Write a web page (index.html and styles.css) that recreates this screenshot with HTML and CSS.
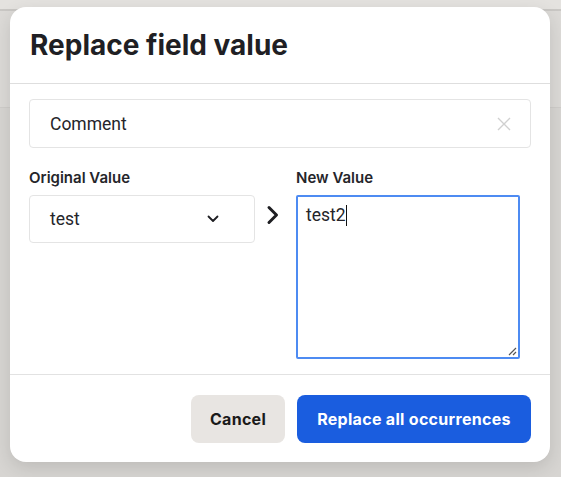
FILE: index.html
```html
<!DOCTYPE html>
<html>
<head>
<meta charset="utf-8">
<link rel="stylesheet" href="styles.css">
</head>
<body>
<div class="backdrop">
  <div class="bg-top"></div>
  <div class="bg-band"></div>
  <div class="bg-rest"></div>
</div>
<div class="modal">
  <div class="modal-header">
    <h1 class="title">Replace field value</h1>
  </div>
  <div class="modal-body">
    <div class="field-input">
      <span class="field-text">Comment</span>
      <svg class="clear-icon" width="14" height="14" viewBox="0 0 14 14"><path d="M1 1L13 13M13 1L1 13" stroke="#d0d0d0" stroke-width="1.4" fill="none"/></svg>
    </div>
    <div class="columns">
      <div class="col">
        <div class="label">Original Value</div>
        <div class="select">
          <span>test</span>
          <svg width="12" height="8" viewBox="0 0 12 8"><path d="M1.5 1.5L6 6L10.5 1.5" stroke="#1e1e22" stroke-width="1.8" fill="none" stroke-linecap="round" stroke-linejoin="round"/></svg>
        </div>
      </div>
      <div class="arrow-col">
        <svg width="14" height="20" viewBox="0 0 14 20"><path d="M3 2.5L10.5 10L3 17.5" stroke="#1e1e22" stroke-width="3" fill="none" stroke-linecap="round" stroke-linejoin="round"/></svg>
      </div>
      <div class="col">
        <div class="label">New Value</div>
        <div class="textarea">
          <span>test2</span><span class="caret"></span>
          <svg class="grip" width="10" height="10" viewBox="0 0 10 10"><path d="M9 2L2 9M9 6L6 9" stroke="#555" stroke-width="1.2" fill="none"/></svg>
        </div>
      </div>
    </div>
  </div>
  <div class="modal-footer">
    <button class="btn btn-cancel">Cancel</button>
    <button class="btn btn-primary">Replace all occurrences</button>
  </div>
</div>
</body>
</html>
```
FILE: styles.css
```css
html, body {
  margin: 0;
  padding: 0;
  height: 100%;
}
body {
  font-family: Inter, "Noto Sans", "Liberation Sans", sans-serif;
  background: #d6d4d1;
  overflow: hidden;
}
.backdrop {
  display: flex;
  flex-direction: column;
  height: 100%;
}
.bg-top {
  height: 9px;
  background: #e4e2df;
  border-bottom: 2px solid #c9c7c4;
}
.bg-band {
  height: 96px;
  background: #dcdad7;
  border-bottom: 1px solid #cfcdca;
}
.bg-rest {
  flex: 1;
  background: #d7d5d2;
}
.modal {
  position: absolute;
  left: 10px;
  top: 7px;
  width: 540px;
  background: #fff;
  border-radius: 16px;
  box-shadow: 0 6px 18px rgba(0,0,0,0.12);
}
.modal-header {
  padding: 21px 20px 21px;
  border-bottom: 1px solid #dedede;
}
.title {
  margin: 0;
  font-size: 28px;
  line-height: 34px;
  font-weight: 700;
  color: #1f1f24;
}
.modal-body {
  padding: 15px 19px 15px;
  border-bottom: 1px solid #e2e2e2;
}
.field-input {
  height: 49px;
  box-sizing: border-box;
  border: 1px solid #e4e4e4;
  border-radius: 4px;
  display: flex;
  align-items: center;
  justify-content: space-between;
  padding: 0 19px 0 20px;
  font-family: Roboto, Inter, sans-serif;
  font-size: 17.5px;
  color: #25252a;
}
.columns {
  display: grid;
  grid-template-columns: 226px 41px 224px;
  margin-top: 20px;
}
.label {
  font-size: 15px;
  line-height: 20px;
  font-weight: 600;
  color: #25252a;
  margin-bottom: 7px;
}
.select {
  height: 48px;
  box-sizing: border-box;
  border: 1px solid #e4e4e4;
  border-radius: 4px;
  display: flex;
  align-items: center;
  justify-content: space-between;
  padding: 0 35px 0 20px;
  font-family: Roboto, Inter, sans-serif;
  font-size: 17.5px;
  color: #25252a;
}
.arrow-col {
  display: flex;
  justify-content: center;
  padding-top: 37px;
  padding-right: 5px;
}
.arrow-col svg {
  display: block;
}
.textarea {
  position: relative;
  height: 164px;
  margin-top: 1px;
  box-sizing: border-box;
  border: 2px solid #4e8bf2;
  border-radius: 2px;
  padding: 7px 8px;
  font-family: Roboto, Inter, sans-serif;
  font-size: 17.5px;
  line-height: 22px;
  color: #25252a;
  display: flex;
  align-items: flex-start;
}
.caret {
  display: inline-block;
  width: 1px;
  height: 21px;
  margin-top: 1px;
  background: #111;
}
.grip {
  position: absolute;
  right: 1px;
  bottom: 1px;
}
.modal-footer {
  display: flex;
  justify-content: flex-end;
  gap: 12px;
  padding: 20px 19px 19px;
}
.btn {
  height: 48px;
  border: none;
  border-radius: 8px;
  font-family: Inter, "Noto Sans", "Liberation Sans", sans-serif;
  font-size: 16px;
  letter-spacing: 0.3px;
  font-weight: 700;
  padding: 0 10px;
  cursor: pointer;
}
.btn-cancel {
  width: 94px;
  background: #e8e5e2;
  color: #1a1a1a;
}
.btn-primary {
  width: 234px;
  background: #1a5ddf;
  color: #fff;
}
```
